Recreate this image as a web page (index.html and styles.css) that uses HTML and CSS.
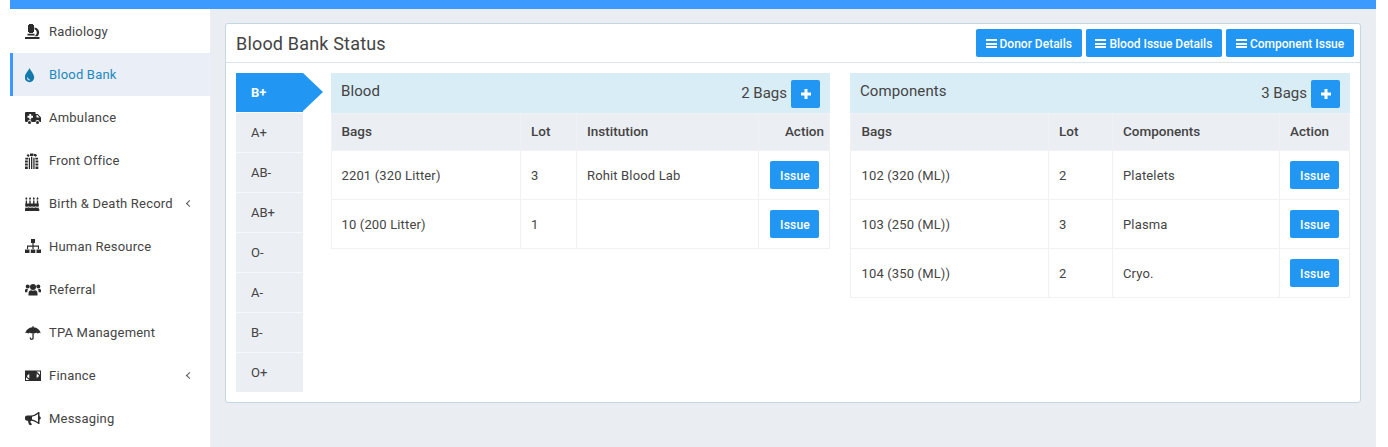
FILE: index.html
```html
<!DOCTYPE html>
<html lang="en">
<head>
    <meta charset="UTF-8">
    <meta name="viewport" content="width=device-width, initial-scale=1.0">
    <title>Blood Bank Status</title>
    <link rel="stylesheet" href="styles.css">
</head>
<body>
    <div class="topbar"></div>
    <div class="wrapper">
        <ul class="sidebar">
            <li><svg class="icon" viewBox="0 0 16 16"><path d="M4 0h4v1h1v7H8v1H4V8H3V1h1zM9.500 3.500c3 .4 4.600 2.600 4.600 5 0 1.500-.6 2.800-1.600 3.700H9.200c1.500-.6 2.600-2 2.600-3.700 0-1.500-.9-2.800-2.300-3.200zM2.500 9.800h7v1.700h-7zM0 13h14.500v2H0z"/></svg>Radiology</li>
            <li class="active"><svg class="icon" viewBox="2 0 16 16"><path fill-rule="evenodd" d="M6.500 1c.5 2 4.700 5.800 4.700 9.500a4.700 4.700 0 0 1-9.400 0C1.800 6.800 6 3 6.500 1zM4 10.500c0 1.800 1.200 3 2.800 3v-1c-1 0-1.800-.9-1.800-2z"/></svg>Blood Bank</li>
            <li><svg class="icon" viewBox="0 0 16 16"><path fill-rule="evenodd" d="M1 2h9.500v2h2.200L16 7.500V12h-1.500a2 2 0 0 0-4 0h-4a2 2 0 0 0-4 0H1a1 1 0 0 1-1-1V3a1 1 0 0 1 1-1zM11.500 5v2.500h3L12.300 5zM4.300 4v1.800H2.500v1.900h1.800v1.800h1.900V7.700H8V5.800H6.200V4z"/><circle cx="4.500" cy="12.500" r="1.500"/><circle cx="12.500" cy="12.500" r="1.500"/></svg>Ambulance</li>
            <li><svg class="icon" viewBox="0 0 16 16"><path d="M0 13.500h2.800V16H0zM0 10.500h2.800v2H0zM0 7.500h2.800v2H0zM.3 4.800h2.800v1.800H.3zM1.500 2.300l1.700-1.300 1.500 1.700-1.500 1.200zM5 .5h3.500V3H5zM9 .9l1.900 0 1.200 1.700-1.600 1.200L9 2.700zM10.300 4.800h2.800v1.800h-2.800zM10.500 7.500h2.800v2h-2.800zM10.500 10.500h2.800v2h-2.800zM10.500 13.500h2.800V16h-2.800zM3.800 4.800h1.200V16H3.800zM6 3.800h1.300V16H6zM8.300 4.800h1.300V16H8.300z"/></svg>Front Office</li>
            <li class="has-sub"><svg class="icon" viewBox="0 0 16 16"><path d="M1.300 1l1 1.500c.2.700-.2 1.200-1 1.200s-1-.5-.9-1.200zM5 1l1 1.500c.2.700-.2 1.200-1 1.200s-1-.5-.9-1.200zM8.800 1l1 1.500c.2.700-.2 1.200-1 1.200s-1-.5-.9-1.200zM12.500 1l1 1.500c.2.700-.2 1.200-1 1.200s-1-.5-.9-1.200zM.7 4.500h1.400v3H.7zM4.300 4.500h1.400v3H4.300zM8.100 4.500h1.400v3H8.100zM11.800 4.500h1.400v3h-1.400zM.2 7.500h13.600v2.700c-1.200.7-2 .7-3.300 0-1.200.8-2.400.8-3.500 0-1.200.8-2.400.8-3.500 0-1.200.7-2 .7-3.300 0zM.2 11.500c1.200.4 2.200.3 3.300-.3 1.200.7 2.400.7 3.500 0 1.200.7 2.400.7 3.500 0 1.100.6 2.100.7 3.300.3v1.500h.5V15H-.2v-2h.4z"/></svg>Birth &amp; Death Record<span class="caret"></span></li>
            <li><svg class="icon" viewBox="0 0 16 16"><path d="M6 0h4v4H8.600v2.500h5.400V10h-1.100V7.800H8.600V10H7.400V7.800H3.100V10H2V6.500h5.400V4H6zM0 10.500h4.500V14H0zM5.800 10.500h4.500V14H5.800zM11.500 10.500H16V14h-4.500z"/></svg>Human Resource</li>
            <li><svg class="icon" viewBox="0 0 16 16"><circle cx="8" cy="5" r="3"/><circle cx="2.700" cy="4.500" r="2"/><circle cx="13.300" cy="4.500" r="2"/><path d="M3.500 13.500v-2C3.500 9.400 4.800 8.300 6 8.300c.6.300 1.300.5 2 .5s1.400-.2 2-.5c1.200 0 2.500 1.100 2.500 3.200v2zM0 10.300V8.500c0-1.200.8-1.800 1.500-1.800.5.400 1 .6 1.800.6-.7.800-1 1.700-1 3zM16 10.300V8.500c0-1.200-.8-1.800-1.500-1.800-.5.400-1 .6-1.800.6.700.8 1 1.700 1 3z"/></svg>Referral</li>
            <li><svg class="icon" viewBox="0 0 16 16"><path d="M7.500 1h1v1.300c3.700.3 6.600 2.800 7.200 6.200-.8-.9-2-.9-2.800.2-.8-1.200-2.300-1.200-3.200-.1L8.700 8v5c0 1.200-.8 2-2 2s-2-.8-2-2v-.5h1.300v.5c0 .5.200.8.700.8s.7-.3.700-.8V8l-1 .6c-.9-1.100-2.400-1.100-3.200.1C2.400 7.600 1.200 7.600.3 8.500c.6-3.400 3.500-5.900 7.200-6.200z"/></svg>TPA Management</li>
            <li class="has-sub"><svg class="icon" viewBox="0 0 16 16"><path fill-rule="evenodd" d="M0 2.500h16V13H0zM11.500 3.500l3.500 3.200V3.500zM1 9.300v2.700h3.200zM4.200 5.500c-.5 1-1 1.500-2 2v1.500c1 .4 1.500 1 2 1.700.2-1.800.2-3.500 0-5.200zM11.800 5.300c-.2 1.800-.2 3.500 0 5.200.5-1 1-1.500 2-1.900V7.200c-1-.4-1.500-1-2-1.900z"/></svg>Finance<span class="caret"></span></li>
            <li><svg class="icon" viewBox="0 0 16 16"><path fill-rule="evenodd" d="M13.500 1h1v4.300c.8.300 1.300 1 1.300 1.700s-.5 1.400-1.300 1.700V13h-1c-2.500-2-5-3-7.500-3.300-.7.400-.7 1.500-.2 2.300.3.500.8.800 1.200 1-.4 1-1.300 1.400-2.300 1.100-.7-.8-1.500-2.400-1.700-4.400H2c-1 0-2-.8-2-2V6.500c0-1.200 1-2 2-2h4c2.500-.2 5-1.500 7.500-3.500zM13 3c-2 1.500-4 2.400-6 2.700v2.800c2 .3 4 1.200 6 2.700z"/></svg>Messaging</li>
        </ul>

        <div class="content">
            <div class="panel">
                <div class="panel-header">
                    <h3>Blood Bank Status</h3>
                    <div class="panel-tools">
                        <a class="btn"><span class="bars"></span>Donor Details</a>
                        <a class="btn"><span class="bars"></span>Blood Issue Details</a>
                        <a class="btn"><span class="bars"></span>Component Issue</a>
                    </div>
                </div>
                <div class="panel-body">
                    <ul class="tabs">
                        <li class="selected">B+</li>
                        <li>A+</li>
                        <li>AB-</li>
                        <li>AB+</li>
                        <li>O-</li>
                        <li>A-</li>
                        <li>B-</li>
                        <li>O+</li>
                    </ul>

                    <div class="stock stock-blood">
                        <div class="stock-head">
                            <span class="stock-title">Blood</span>
                            <div class="stock-count">2 Bags <a class="btn btn-add"><svg viewBox="0 0 12 12"><path d="M4.500 1h3v3.500H11v3H7.500V11h-3V7.500H1v-3h3.500z"/></svg></a></div>
                        </div>
                        <table>
                            <colgroup><col class="c1"><col class="c2"><col class="c3"><col class="c4"></colgroup>
                            <tr><th>Bags</th><th>Lot</th><th>Institution</th><th class="th-right">Action</th></tr>
                            <tr><td>2201 (320 Litter)</td><td>3</td><td>Rohit Blood Lab</td><td><a class="btn btn-issue">Issue</a></td></tr>
                            <tr><td>10 (200 Litter)</td><td>1</td><td></td><td><a class="btn btn-issue">Issue</a></td></tr>
                        </table>
                    </div>

                    <div class="stock stock-comp">
                        <div class="stock-head">
                            <span class="stock-title">Components</span>
                            <div class="stock-count">3 Bags <a class="btn btn-add"><svg viewBox="0 0 12 12"><path d="M4.500 1h3v3.500H11v3H7.500V11h-3V7.500H1v-3h3.500z"/></svg></a></div>
                        </div>
                        <table>
                            <colgroup><col class="c1"><col class="c2"><col class="c3"><col class="c4"></colgroup>
                            <tr><th>Bags</th><th>Lot</th><th>Components</th><th>Action</th></tr>
                            <tr><td>102 (320 (ML))</td><td>2</td><td>Platelets</td><td><a class="btn btn-issue">Issue</a></td></tr>
                            <tr><td>103 (250 (ML))</td><td>3</td><td>Plasma</td><td><a class="btn btn-issue">Issue</a></td></tr>
                            <tr><td>104 (350 (ML))</td><td>2</td><td>Cryo.</td><td><a class="btn btn-issue">Issue</a></td></tr>
                        </table>
                    </div>
                </div>
            </div>
        </div>
    </div>
</body>
</html>
```

FILE: styles.css
```css
* {
    box-sizing: border-box;
}
html, body {
    height: 100%;
}
body {
    margin: 0;
    padding: 0 12px 0 10px;
    background-color: #fff;
    font-family: Roboto, "Liberation Sans", sans-serif;
    font-size: 13px;
    color: #444;
    overflow: hidden;
}
ul {
    list-style: none;
    margin: 0;
    padding: 0;
}
.topbar {
    height: 9px;
    background-color: #3c9aff;
}
.wrapper {
    display: flex;
    height: 438px;
}

/* sidebar */
.sidebar {
    width: 200px;
    flex: none;
    padding-top: 1px;
    background-color: #fff;
}
.sidebar li {
    display: flex;
    align-items: center;
    height: 43px;
    padding-left: 15px;
    color: #444;
    letter-spacing: .2px;
    position: relative;
}
.sidebar li.active {
    background-color: #eaeef6;
    border-left: 3px solid #3c9aff;
    padding-left: 12px;
    color: #1b8ac0;
}
.icon {
    width: 16px;
    height: 16px;
    margin-right: 8px;
    fill: #2b2b2b;
    flex: none;
}
.active .icon {
    fill: #1279ad;
}
.caret {
    position: absolute;
    right: 18px;
    top: 19px;
    width: 5px;
    height: 5px;
    border-left: 1px solid #555;
    border-bottom: 1px solid #555;
    transform: rotate(45deg);
}

/* content */
.content {
    flex: 1;
    background-color: #eaeef3;
    padding: 14px 15px;
}
.panel {
    height: 380px;
    background-color: #fff;
    border: 1px solid #c5d7e2;
    border-radius: 3px;
}
.panel-header {
    display: flex;
    justify-content: space-between;
    align-items: center;
    height: 39px;
    padding: 0 6px 0 10px;
    border-bottom: 1px solid #dde5ea;
}
.panel-header h3 {
    margin: 0;
    font-size: 18px;
    font-weight: 400;
    letter-spacing: .18px;
    color: #444;
}
.panel-tools {
    display: flex;
    gap: 4px;
}
.btn {
    display: inline-flex;
    align-items: center;
    justify-content: center;
    background-color: #2196f3;
    color: #fff;
    border-radius: 2px;
    font-size: 12px;
    font-weight: 500;
}
.panel-tools .btn {
    height: 28px;
    padding: 1px 9.800px 0;
}
.bars {
    display: inline-block;
    width: 11px;
    height: 9px;
    margin-right: 3px;
    border-top: 2px solid #fff;
    border-bottom: 2px solid #fff;
    position: relative;
}
.bars::after {
    content: "";
    position: absolute;
    left: 0;
    right: 0;
    top: 1.500px;
    height: 2px;
    background-color: #fff;
}
.panel-body {
    display: flex;
    padding: 10px;
}

/* blood group tabs */
.tabs {
    width: 67px;
    flex: none;
    margin-right: 28px;
}
.tabs li {
    height: 40px;
    padding-left: 15px;
    line-height: 39px;
    background-color: #ebeef3;
    border-bottom: 1px solid #f7f8fa;
}
.tabs li:last-child {
    height: 39px;
    border-bottom: none;
}
.tabs li.selected {
    height: 39px;
    background-color: #2196f3;
    border-bottom: none;
    color: #fff;
    font-weight: 700;
    position: relative;
    margin-bottom: 1px;
}
.tabs li.selected::after {
    content: "";
    position: absolute;
    left: 100%;
    top: 0;
    border-left: 20px solid #2196f3;
    border-top: 19.500px solid transparent;
    border-bottom: 19.500px solid transparent;
}

/* stock tables */
.stock-blood {
    width: 499px;
    margin-right: 20px;
}
.stock-comp {
    width: 500px;
}
.stock-head {
    display: flex;
    justify-content: space-between;
    height: 40px;
    padding: 0 10px;
    background-color: #d9edf7;
    font-size: 15px;
}
.stock-title {
    padding-top: 9px;
    letter-spacing: .1px;
}
.stock-count {
    display: flex;
    align-items: flex-start;
    gap: 4px;
    padding-top: 11px;
}
.btn-add {
    width: 29px;
    height: 28px;
    margin-top: -4px;
}
.btn-add svg {
    width: 12px;
    height: 12px;
    fill: #fff;
}
table {
    width: 100%;
    table-layout: fixed;
    border-collapse: collapse;
}
th, td {
    padding: 0 10px;
    border: 1px solid #f0f1f3;
    text-align: left;
    letter-spacing: .15px;
}
th {
    height: 37px;
    padding-bottom: 2px;
    background-color: #ebeef3;
    font-size: 13.500px;
    font-weight: 500;
    letter-spacing: 0;
}
td {
    height: 49px;
    color: #444;
}
th:first-child, td:first-child {
    padding-left: 9.500px;
}
.stock-comp th:first-child, .stock-comp td:first-child {
    padding-left: 10.500px;
}
.th-right {
    text-align: right;
    padding-right: 5px;
}
.btn-issue {
    width: 49px;
    height: 28px;
    padding: 1px 0 0 1px;
    letter-spacing: .2px;
}
.stock-blood .btn-issue {
    margin-left: 1px;
}
.stock-blood .c1 { width: 189px; }
.stock-blood .c2 { width: 56px; }
.stock-blood .c3 { width: 182px; }
.stock-comp .c1 { width: 198px; }
.stock-comp .c2 { width: 64px; }
.stock-comp .c3 { width: 167px; }
```
